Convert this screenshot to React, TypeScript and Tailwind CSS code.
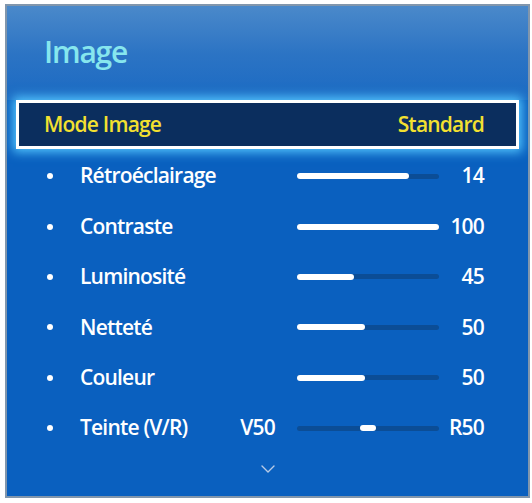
import { ChevronDown } from 'lucide-react';

const ROWS = [
    { label: 'Rétroéclairage', value: '14', fill: 112 },
    { label: 'Contraste', value: '100', fill: 142 },
    { label: 'Luminosité', value: '45', fill: 57 },
    { label: 'Netteté', value: '50', fill: 68 },
    { label: 'Couleur', value: '50', fill: 68 },
];

function Slider({ fill }: { fill: number }) {
    return (
        <div className="relative ml-[22px] w-[142px] h-[6px] flex items-center">
            <div className="absolute inset-x-0 h-[5px] rounded-full bg-[#0b4d96]" />
            <div className="relative h-[6px] rounded-full bg-white" style={{ width: fill }} />
        </div>
    );
}

export default function App() {
    return (
        <div className="min-h-screen bg-white pt-[4px] pl-[5px]" style={{ fontFamily: '"Open Sans", "Noto Sans", sans-serif' }}>
            <div className="w-[525px] h-[494px] border-2 border-[#8196ac] bg-[#0a60bf] flex flex-col">
                {/* Header */}
                <div className="h-[94px] bg-gradient-to-b from-[#4a89ca] via-[#2c74c4] to-[#1a6ac3] pl-[37px] pt-[27px]">
                    <h1 className="text-[30px] leading-[38px] font-semibold tracking-[-1.2px] text-[#86e6ee]">Image</h1>
                </div>

                {/* Selected row */}
                <div className="mx-[9px] h-[49px] border-[3px] border-white bg-[#0b2e5e] shadow-[0_0_10px_3px_#55c8ff] flex items-center justify-between pl-[25px] pr-[32px]">
                    <span className="text-[21px] font-semibold tracking-[-0.8px] text-[#f3e030]">Mode Image</span>
                    <span className="text-[21px] font-semibold tracking-[-0.8px] text-[#f3e030]">Standard</span>
                </div>

                {/* Sliders */}
                <div className="mt-[2px] flex flex-col">
                    {ROWS.map(r => (
                        <div key={r.label} className="h-[50.4px] flex items-center pl-[40px] text-white">
                            <div className="w-[6px] h-[6px] rounded-full bg-white" />
                            <span className="ml-[27px] w-[150px] text-[21px] font-semibold tracking-[-0.8px]">{r.label}</span>
                            <span className="w-[45px]" />
                            <Slider fill={r.fill} />
                            <span className="w-[45px] text-right text-[21px] font-semibold tracking-[-0.8px]">{r.value}</span>
                        </div>
                    ))}
                    <div className="h-[50.4px] flex items-center pl-[40px] text-white">
                        <div className="w-[6px] h-[6px] rounded-full bg-white" />
                        <span className="ml-[27px] w-[150px] text-[21px] font-semibold tracking-[-0.8px]">Teinte (V/R)</span>
                        <span className="w-[45px] text-right text-[21px] font-semibold tracking-[-0.8px]">V50</span>
                        <div className="relative ml-[22px] w-[142px] h-[6px] flex items-center">
                            <div className="absolute inset-x-0 h-[5px] rounded-full bg-[#0b4d96]" />
                            <div className="relative ml-[63px] w-[16px] h-[6px] rounded-full bg-white" />
                        </div>
                        <span className="w-[45px] text-right text-[21px] font-semibold tracking-[-0.8px]">R50</span>
                    </div>
                </div>

                <div className="flex justify-center mt-[4px]">
                    <ChevronDown className="w-[24px] h-[24px] text-[#b8cbe6]" strokeWidth={1.4} />
                </div>
            </div>
        </div>
    );
}
